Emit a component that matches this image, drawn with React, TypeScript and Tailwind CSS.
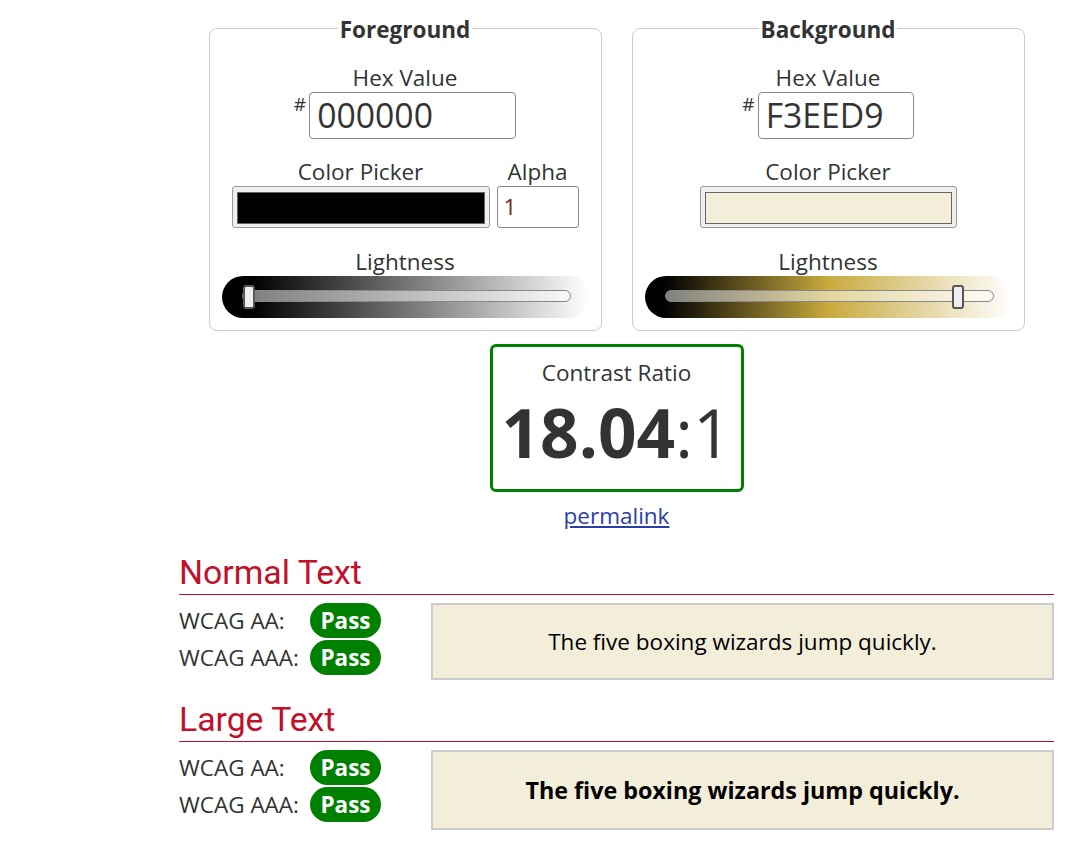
const body = "font-['Open_Sans',sans-serif]";

function Slider({ gradient, pos }: { gradient: string; pos: number }) {
  return (
    <div
      className="relative h-[42px] w-[367px] mx-auto rounded-full"
      style={{ background: gradient }}
    >
      <div className="absolute left-[20px] right-[18px] top-[14px] h-[12px] rounded-full border border-[#888] bg-white/50" />
      <div
        className="absolute top-[9px] h-[24px] w-[12px] rounded-[3px] border-2 border-[#555] bg-[#eee]"
        style={{ left: pos }}
      />
    </div>
  );
}

function Swatch({ color, width }: { color: string; width: string }) {
  return (
    <div className={`${width} h-[42px] rounded-[3px] border border-[#999] bg-[#efefef] px-[4px] pt-[5px] pb-[3px]`}>
      <div className="h-full w-full border border-[#666]" style={{ background: color }} />
    </div>
  );
}

function HexInput({ value, width }: { value: string; width: string }) {
  return (
    <div className="flex justify-center">
      <span className="mt-[2px] mr-[3px] text-[19px] leading-[20px] text-[#333]">#</span>
      <div className={`${width} h-[47px] rounded-[4px] border border-[#888] pl-[7px] text-[33.75px] leading-[45px] text-[#333]`}>
        {value}
      </div>
    </div>
  );
}

function Panel({ title, children }: { title: string; children: React.ReactNode }) {
  return (
    <fieldset className="w-[393px] rounded-[8px] border border-[#ccc] px-[12px] pb-[12px]">
      <legend className="mx-auto px-[2px] pt-[4px] text-[22.5px] font-bold leading-[30px] text-[#333]">{title}</legend>
      {children}
    </fieldset>
  );
}

function Label({ children }: { children: React.ReactNode }) {
  return <div className="text-center text-[22.5px] leading-[28px] text-[#333]">{children}</div>;
}

function Badge() {
  return (
    <span className="inline-flex h-[35px] w-[71px] items-center justify-center rounded-full bg-[#008000] text-[22.5px] font-bold text-white">
      Pass
    </span>
  );
}

function Result({ title, bold, top }: { title: string; bold?: boolean; top: string }) {
  return (
    <div className={top}>
      <h2 className="border-b border-[#c0102a] pb-[2px] font-['Roboto',sans-serif] text-[33.75px] leading-[38px] text-[#c0102a]">
        {title}
      </h2>
      <div className="mt-[8px] flex">
        <div className="w-[252px] shrink-0">
          <div className="flex items-center">
            <span className="w-[131px] text-[22.5px] leading-[35px] text-[#333]">WCAG AA:</span>
            <Badge />
          </div>
          <div className="mt-[2px] flex items-center">
            <span className="w-[131px] text-[22.5px] leading-[35px] text-[#333]">WCAG AAA:</span>
            <Badge />
          </div>
        </div>
        <div
          className={`flex flex-1 items-center justify-center border-2 border-[#ccc] bg-[#F3EED9] text-black ${
            bold ? "h-[80px] text-[23.3px] font-bold" : "h-[77px] text-[22.5px]"
          }`}
        >
          The five boxing wizards jump quickly.
        </div>
      </div>
    </div>
  );
}

export default function App() {
  return (
    <div className={`${body} min-h-[846px] bg-white`}>
      <div className="ml-[179px] w-[875px] pt-[11px]">
        <div className="flex justify-center gap-[30px]">
          <Panel title="Foreground">
            <div className="mt-[19px]">
              <Label>Hex Value</Label>
              <HexInput value="000000" width="w-[207px]" />
            </div>
            <div className="mt-[19px] flex justify-center gap-[7px]">
              <div>
                <Label>Color Picker</Label>
                <Swatch color="#000000" width="w-[258px]" />
              </div>
              <div>
                <Label>Alpha</Label>
                <div className="h-[42px] w-[82px] rounded-[3px] border border-[#888] pl-[6px] text-[22.5px] leading-[40px] text-[#7a2020]">
                  1
                </div>
              </div>
            </div>
            <div className="mt-[20px]">
              <Label>Lightness</Label>
              <Slider gradient="linear-gradient(to right, #000 8%, #fff 100%)" pos={21} />
            </div>
          </Panel>
          <Panel title="Background">
            <div className="mt-[19px]">
              <Label>Hex Value</Label>
              <HexInput value="F3EED9" width="w-[156px]" />
            </div>
            <div className="mt-[19px] flex justify-center">
              <div>
                <Label>Color Picker</Label>
                <Swatch color="#F3EED9" width="w-[257px]" />
              </div>
            </div>
            <div className="mt-[20px]">
              <Label>Lightness</Label>
              <Slider gradient="linear-gradient(to right, #000 5%, #c8aa3e 50%, #fff 100%)" pos={307} />
            </div>
          </Panel>
        </div>

        <div className="mt-[13px] flex justify-center">
          <div className="h-[148px] w-[254px] rounded-[6px] border-[3px] border-[#008000] text-center text-[#333]">
            <div className="mt-[13px] text-[22.5px] leading-[26px]">Contrast Ratio</div>
            <div className="text-[67.5px] leading-[92px]">
              <span className="font-bold">18.04</span>:1
            </div>
          </div>
        </div>
        <div className="mt-[10px] text-center">
          <a href="#" className="text-[22.5px] leading-[28px] text-[#2a3ea8] underline">
            permalink
          </a>
        </div>

        <Result title="Normal Text" top="mt-[24px]" />
        <Result title="Large Text" bold top="mt-[21px]" />
      </div>
    </div>
  );
}
